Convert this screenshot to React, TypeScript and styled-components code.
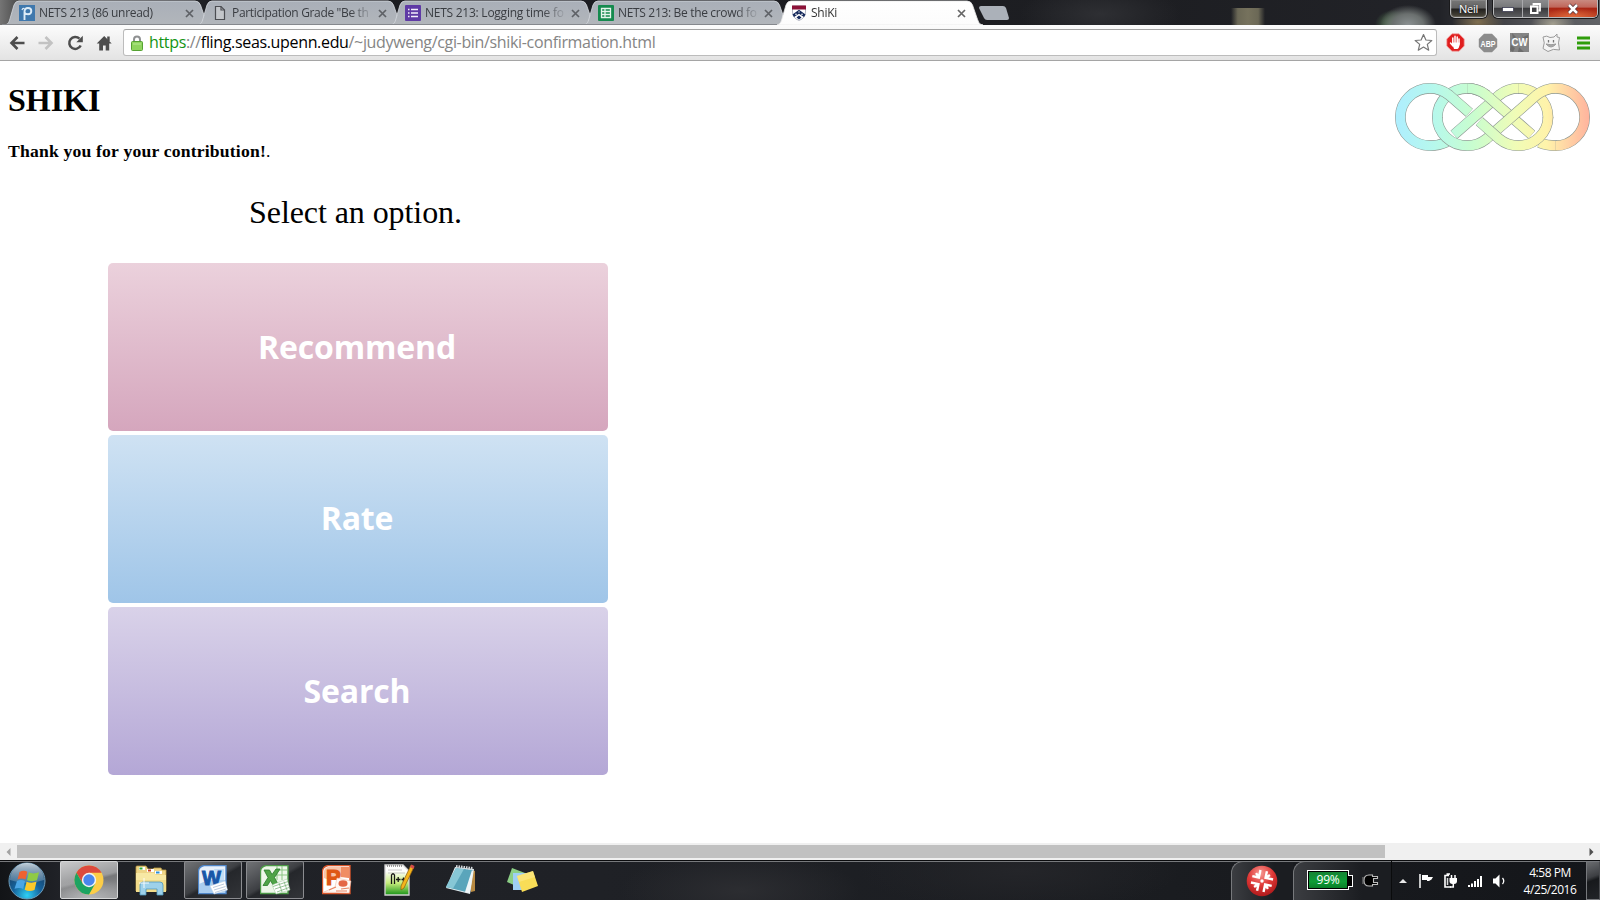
import React from "react";
import styled, { createGlobalStyle, css } from "styled-components";

const GlobalStyle = createGlobalStyle`
  * { box-sizing: border-box; }
  html, body { margin: 0; padding: 0; overflow: hidden; background: #fff; }
`;

const uiFont = `"Open Sans", "Noto Sans", sans-serif`;

const Screen = styled.div`
  width: 1600px;
  height: 900px;
  display: flex;
  flex-direction: column;
  overflow: hidden;
  background: #fff;
  font-family: ${uiFont};
`;

/* ---------- title bar ---------- */

const TitleBar = styled.header`
  height: 25px;
  flex: none;
  display: flex;
  align-items: flex-start;
  padding-left: 6px;
  overflow: hidden;
  background:
    radial-gradient(ellipse 28px 20px at 1408px 25px, #8b9192 0, #6b706f 55%, transparent 100%),
    radial-gradient(ellipse 18px 14px at 1393px 24px, #5e8a5a 0, transparent 100%),
    linear-gradient(90deg, transparent, #6b6856 20%, #76725d 50%, #6b6856 80%, transparent) 1231px 8px / 34px 17px no-repeat,
    radial-gradient(ellipse 22px 14px at 1553px 24px, #a39f8f 0, transparent 100%),
    radial-gradient(ellipse 26px 14px at 1478px 22px, #806f50 0, transparent 100%),
    radial-gradient(ellipse 80px 30px at 1100px 14px, #2e2f33 0, transparent 100%),
    linear-gradient(90deg, #757575 0, #555 14px, #1b1c21 220px, #1d1e22 1150px, #222328 1440px, #55565a 1540px, #606266 1600px);
`;

const TabItem = styled.div<{ $active?: boolean }>`
  position: relative;
  z-index: ${(p) => (p.$active ? 2 : 1)};
  width: 193px;
  height: 25px;
  flex: none;
  display: flex;
  align-items: center;
  padding: 1px 0 0 13px;
`;

const TabShape = styled.svg`
  position: absolute;
  left: -4px;
  top: 0;
  z-index: -1;
`;

const TabTitle = styled.span<{ $active?: boolean; $ls: number }>`
  width: 142px;
  margin-left: 4px;
  flex: none;
  overflow: hidden;
  white-space: nowrap;
  font-size: 12px;
  line-height: 18px;
  letter-spacing: ${(p) => p.$ls}px;
  color: ${(p) => (p.$active ? "#333" : "#3a3d42")};
  mask-image: linear-gradient(90deg, #000 118px, transparent 142px);
`;

const CloseGlyph = styled.svg`
  margin-left: 4px;
  flex: none;
`;

const NewTab = styled.div`
  width: 30px;
  height: 14px;
  margin: 6px 0 0 8px;
  flex: none;
  clip-path: path("M2 0H24Q26 0 27 2L30 12Q30 14 28 14H8Q6 14 5 12L0 2Q0 0 2 0Z");
  background: #abb1b9;
`;

const WindowButtons = styled.div`
  margin-left: auto;
  display: flex;
  gap: 6px;
  padding-right: 2px;
`;

const chromeButton = css`
  height: 18px;
  border: 1px solid #b9babc;
  border-top: 0;
  box-shadow: 0 0 0 1px #1a1a1c, inset 0 0 0 1px rgba(255, 255, 255, 0.12);
  border-radius: 0 0 5px 5px;
`;

const UserButton = styled.div`
  ${chromeButton}
  width: 37px;
  background: linear-gradient(#777 0, #636363 48%, #1f1e1c 52%, #4d493d 100%);
  color: #fff;
  font-size: 11px;
  line-height: 17px;
  text-align: center;
  letter-spacing: -0.2px;
  text-shadow: 0 0 2px #222;
`;

const ControlGroup = styled.div`
  ${chromeButton}
  width: 105px;
  display: flex;
  overflow: hidden;
`;

const ControlButton = styled.div<{ $w: number; $close?: boolean }>`
  width: ${(p) => p.$w}px;
  height: 17px;
  display: flex;
  align-items: center;
  justify-content: center;
  border-right: 1px solid #a9a9ac;
  &:last-child { border-right: 0; }
  background: ${(p) =>
    p.$close
      ? "radial-gradient(ellipse 30px 9px at 50% 100%, #e06a3c, transparent), linear-gradient(#c98a80 0, #c0665a 42%, #a92514 48%, #b93c20 100%)"
      : "linear-gradient(#8b8b8d 0, #77787a 42%, #3a3a3d 50%, #5b5c5f 100%)"};
`;

/* ---------- toolbar ---------- */

const Toolbar = styled.div`
  height: 36px;
  flex: none;
  display: flex;
  align-items: center;
  padding-left: 2px;
  border-bottom: 1px solid #a5a5a5;
  background: linear-gradient(#fcfcfc, #e3e3e3);
`;

const ToolButton = styled.div<{ $w: number }>`
  width: ${(p) => p.$w}px;
  height: 22px;
  flex: none;
  display: flex;
  align-items: center;
  justify-content: center;
`;

const Omnibox = styled.div`
  width: 1314px;
  height: 27px;
  margin: 0 2px 0 5px;
  padding: 0 3px 0 7px;
  flex: none;
  display: flex;
  align-items: center;
  background: #fff;
  border: 1px solid #bcbcbc;
  border-top-color: #a3a3a3;
  border-radius: 3px;
`;

const Url = styled.span`
  flex: 1;
  margin-left: 6px;
  padding-bottom: 1px;
  white-space: nowrap;
  font-size: 16px;
  line-height: 24px;
  letter-spacing: -0.34px;
  color: #858585;
`;

const Scheme = styled.span`
  color: #149414;
`;

const Host = styled.span`
  color: #000;
`;

/* ---------- page ---------- */

const Page = styled.main`
  position: relative;
  flex: 1;
  min-height: 0;
  padding: 0 8px;
  background: #fff;
  color: #000;
  font-family: "Liberation Serif", "Times New Roman", serif;
`;

const Logo = styled.svg`
  position: absolute;
  right: 0;
  top: -1px;
`;

const Heading = styled.h1`
  margin: 0;
  padding-top: 21px;
  font-size: 32px;
  line-height: 37px;
`;

const Thanks = styled.p`
  margin: 0;
  padding: 22px 0 1px;
  font-size: 17.6px;
  line-height: 20px;
  letter-spacing: 0.2px;
`;

const Options = styled.section`
  width: 500px;
  margin-left: 100px;
  display: flex;
  flex-direction: column;
  gap: 4px;
`;

const Prompt = styled.div`
  height: 97px;
  padding: 32px 5px 0 0;
  font-size: 32px;
  line-height: 37px;
  letter-spacing: -0.08px;
  text-align: center;
`;

const OptionCard = styled.button<{ $from: string; $to: string; $lift?: number }>`
  height: 168px;
  padding: 0 2px ${(p) => p.$lift ?? 0}px 0;
  border: 0;
  border-radius: 5px;
  background: linear-gradient(${(p) => p.$from}, ${(p) => p.$to});
  color: #fff;
  font: bold 32px/44px "Open Sans", sans-serif;
  letter-spacing: -0.15px;
`;

const Scrollbar = styled.div`
  height: 17px;
  flex: none;
  display: flex;
  align-items: center;
  background: #f0f0f0;
`;

const ScrollArrow = styled.div`
  width: 17px;
  display: flex;
  justify-content: center;
`;

const ScrollTrack = styled.div`
  flex: 1;
`;

const ScrollThumb = styled.div`
  width: 1368px;
  height: 13px;
  background: #c1c1c1;
`;

/* ---------- taskbar ---------- */

const Taskbar = styled.footer`
  height: 40px;
  flex: none;
  display: flex;
  border-top: 1px solid #0b0c0e;
  box-shadow: inset 0 1px 0 #77797c;
  padding-left: 4px;
  background:
    radial-gradient(ellipse 120px 40px at 740px 30px, #2c2d31, transparent),
    radial-gradient(ellipse 160px 40px at 1020px 10px, #242529, transparent),
    linear-gradient(90deg, #121417 0, #202227 60px, #1f2126 600px, #1b1d21 1100px, #14161a 1600px);
`;

const StartOrb = styled.div`
  width: 45px;
  margin-right: 11px;
  display: flex;
  align-items: center;
  justify-content: center;
`;

const TaskButton = styled.div<{ $state?: "active" | "open" }>`
  width: 58px;
  height: 38px;
  margin: 0 4px 0 0;
  flex: none;
  display: flex;
  align-items: center;
  justify-content: center;
  border: 1px solid transparent;
  border-radius: 2px;
  ${(p) =>
    p.$state === "active" &&
    css`
      border-color: #d5d6d7;
      background: radial-gradient(ellipse 50px 20px at 50% 100%, #b5b6b8, transparent),
        linear-gradient(165deg, #c9c9ca 0, #9b9c9e 48%, #77787a 54%, #8f9092 100%);
    `}
  ${(p) =>
    p.$state === "open" &&
    css`
      border-color: #8b8c90;
      background: linear-gradient(150deg, #717376 0, #3d3f43 48%, #25272b 54%, #323438 100%);
    `}
`;

const Spacer = styled.div`
  flex: 1;
`;

const TrayBand = styled.div<{ $w: number }>`
  width: ${(p) => p.$w}px;
  height: 39px;
  flex: none;
  display: flex;
  align-items: center;
  border-left: 1px solid #77797c;
  border-top: 1px solid #77797c;
  border-radius: 12px 0 0 0;
  background: linear-gradient(90deg, #3b3d41, #1b1d21 70%);
`;

const BandIcon = styled.div`
  margin-left: 14px;
  height: 32px;
`;

const Battery = styled.div`
  position: relative;
  width: 42px;
  height: 20px;
  margin: 0 0 2px 13px;
  border: 1px solid #fff;
  padding: 1px;
  background: #000;
  &::after {
    content: "";
    position: absolute;
    right: -5px;
    top: 4px;
    width: 4px;
    height: 10px;
    border: 1px solid #fff;
    border-left: 0;
    background: #000;
  }
`;

const BatteryFill = styled.div`
  height: 16px;
  background: linear-gradient(#158334, #0d9c35 60%, #0a7e29);
  color: #fff;
  font-size: 12px;
  line-height: 16px;
  text-align: center;
  letter-spacing: -0.2px;
`;

const PlugIcon = styled.svg`
  margin: 0 0 2px 13px;
`;

const Tray = styled.div`
  width: 195px;
  height: 39px;
  flex: none;
  display: flex;
  align-items: center;
  border-left: 1px solid #0a0b0c;
`;

const TrayIcon = styled.div<{ $w: number }>`
  width: ${(p) => p.$w}px;
  flex: none;
  display: flex;
  align-items: center;
  justify-content: center;
`;

const Clock = styled.div`
  flex: 1;
  padding: 1px 0 0 5px;
  color: #fff;
  font-size: 12px;
  line-height: 17px;
  letter-spacing: -0.45px;
  text-align: center;
  white-space: nowrap;
`;

const ShowDesktop = styled.div`
  width: 14px;
  height: 39px;
  flex: none;
  border: 1px solid #77797d;
  border-right-color: #4a4c50;
  background: linear-gradient(160deg, #6b6d70 0, #3d3f43 40%, #17191c 50%, #222428 100%);
`;

/* ---------- tab parts ---------- */

const tabPath = "M3 25C7 23.5 7 22 8.500 17L12 5Q13.500 1 17 1H193Q197 1 198.500 5L203 18C205 23 205 24 209 25Z";

function PFavicon() {
  return (
    <svg width="16" height="16">
      <rect width="16" height="16" fill="#3f78ad" />
      <path d="M5.500 15V7Q5.500 3 9 3Q12.300 3 12.300 6Q12.300 9.200 9 9.200Q6.500 9 5.500 7.500" fill="none" stroke="#dcebf7" strokeWidth="1.900" />
      <path d="M3 5Q3.500 3 5.500 3.500" fill="none" stroke="#dcebf7" strokeWidth="1.200" />
    </svg>
  );
}

function PageFavicon() {
  return (
    <svg width="16" height="16" fill="#c3c6ca" stroke="#4b4d52" strokeWidth="1.200">
      <path d="M3.500 1.500H9L12.500 5V14.500H3.500Z" />
      <path d="M9 1.500V5H12.500" fill="none" />
    </svg>
  );
}

function FormFavicon() {
  return (
    <svg width="16" height="16">
      <rect width="16" height="16" rx="1" fill="#5f3aa5" />
      <path d="M3 4.500H4.500M3 8H4.500M3 11.500H4.500M6 4.500H13M6 8H13M6 11.500H13" stroke="#f3effa" strokeWidth="1.600" />
    </svg>
  );
}

function SheetFavicon() {
  return (
    <svg width="16" height="16">
      <rect width="16" height="16" rx="1" fill="#158a4e" />
      <path d="M3.500 3.500H12.500V12.500H3.500ZM3.500 6.500H12.500M3.500 9.500H12.500M7 3.500V12.500" fill="none" stroke="#e6f4ec" strokeWidth="1.300" />
    </svg>
  );
}

function ShieldFavicon() {
  return (
    <svg width="16" height="16">
      <path d="M1.500 1H14.500V7Q14.500 13 8 15.500Q1.500 13 1.500 7Z" fill="#fff" stroke="#8f93a8" strokeWidth="0.700" />
      <path d="M1 0.500H15V4.500H1Z" fill="#8d1238" />
      <path d="M1.500 9.500L8 4.800L14.500 9.500L13 12L8 8.700L3 12Z" fill="#15295c" />
      <path d="M5.500 12.500L8 10.500L10.500 12.500L8 14.500Z" fill="#15295c" />
      <circle cx="5" cy="9.300" r=".8" fill="#fff" />
      <circle cx="11" cy="9.300" r=".8" fill="#fff" />
      <circle cx="8" cy="6.900" r=".7" fill="#fff" />
    </svg>
  );
}

type TabProps = { id: number; title: string; ls: number; icon: React.ReactNode; active?: boolean };

function Tab({ id, title, ls, icon, active }: TabProps) {
  return (
    <TabItem $active={active}>
      <TabShape width="212" height="25">
        <defs>
          <linearGradient id={`tab${id}`} x1="0" y1="0" x2="0" y2="1">
            <stop offset="0" stopColor={active ? "#fff" : "#a9afb8"} />
            <stop offset="1" stopColor={active ? "#fcfcfc" : "#b2b6bb"} />
          </linearGradient>
        </defs>
        <path d={tabPath} fill={`url(#tab${id})`} stroke={active ? "#e8e8e8" : "#d5d9de"} strokeWidth="0.800" />
        {!active && <path d="M0 24.500H212" stroke="#85888d" />}
      </TabShape>
      {icon}
      <TabTitle $active={active} $ls={ls}>{title}</TabTitle>
      <CloseGlyph width="9" height="9">
        <path d="M1 1L8 8M8 1L1 8" stroke={active ? "#666" : "#5e6166"} strokeWidth="1.700" />
      </CloseGlyph>
    </TabItem>
  );
}

/* ---------- knot logo ---------- */

function Strand({ d }: { d: string }) {
  return (
    <g fill="none">
      <path d={d} stroke="#8c9690" strokeWidth="32" />
      <path d={d} stroke="url(#knot)" strokeWidth="28.500" />
    </g>
  );
}

function KnotLogo() {
  return (
    <Logo width="220" height="110" viewBox="0 0 660 330">
      <defs>
        <linearGradient id="knot" gradientUnits="userSpaceOnUse" x1="45" y1="0" x2="629" y2="0">
          <stop offset="0" stopColor="#aeeeff" />
          <stop offset=".2" stopColor="#b6f8ec" />
          <stop offset=".4" stopColor="#c8fdcf" />
          <stop offset=".62" stopColor="#f0fcb6" />
          <stop offset=".78" stopColor="#fff3aa" />
          <stop offset=".9" stopColor="#ffcfa4" />
          <stop offset="1" stopColor="#ffb39d" />
        </linearGradient>
      </defs>
      <Strand d="M172 175V171A90 86 0 0 1 262 85Q294 85 319 105" />
      <Strand d="M200 246Q177 257 150 257A89 86 0 0 1 150 85Q182 85 207 105L268 158" />
      <Strand d="M418 85H415Q383 85 358 105L222 224" />
      <Strand d="M262 85Q294 85 319 105L455 224" />
      <Strand d="M530 257H527Q500 257 478 248" />
      <Strand d="M415 85A89 86 0 0 1 504 171V175" />
      <Strand d="M527 257A87 86 0 0 0 527 85Q495 85 470 105L319 237Q294 257 262 257A90 86 0 0 1 172 171" />
      <Strand d="M298 184L358 237Q383 257 415 257A89 86 0 0 0 504 171" />
    </Logo>
  );
}

/* ---------- taskbar icons ---------- */

const IconLetter = styled.text`
  font-family: "Liberation Sans", sans-serif;
  font-weight: bold;
`;

function OrbIcon() {
  return (
    <svg width="38" height="38" viewBox="0 0 38 38">
      <defs>
        <radialGradient id="orb" cx=".5" cy=".9" r=".8">
          <stop offset="0" stopColor="#2fd0f5" />
          <stop offset=".5" stopColor="#15629c" />
          <stop offset="1" stopColor="#1b3c5e" />
        </radialGradient>
        <linearGradient id="orbShine" x1="0" y1="0" x2="0" y2="1">
          <stop offset="0" stopColor="#dfe9ef" stopOpacity=".85" />
          <stop offset="1" stopColor="#8fb0c6" stopOpacity=".35" />
        </linearGradient>
      </defs>
      <circle cx="19" cy="19" r="18" fill="url(#orb)" stroke="#6d9dbb" strokeWidth="1" />
      <path d="M2 18A17 17 0 0 1 36 18Q19 24 2 18Z" fill="url(#orbShine)" />
      <path d="M11.500 10Q15.500 7.500 19.300 9.700L17.500 17.500Q13.500 15.500 9.500 17.500Z" fill="#ee6230" />
      <path d="M20.800 10.300Q25 12.500 31 10.300L29 18.300Q24 20 19 18.200Z" fill="#8fca45" />
      <path d="M9 19Q13 17 17 19L15.200 27Q11.500 25 6.500 26.800Z" fill="#4ba6e6" />
      <path d="M18.600 19.700Q23 21.500 28.500 19.800L26.500 28Q21 30 16.700 27.700Z" fill="#fbc92b" />
    </svg>
  );
}

function ChromeIcon() {
  return (
    <svg width="30" height="30" viewBox="-15 -15 30 30">
      <circle r="14.500" fill="#fccd48" />
      <path d="M-12.560 -7.250A14.500 14.500 0 0 1 12.560 -7.250H0L-6.280 3.620Z" fill="#dc4a3d" />
      <path d="M-12.560 -7.250A14.500 14.500 0 0 0 0 14.500L6.280 3.620L-6.280 3.620Z" fill="#1da362" />
      <circle r="7.200" fill="#f3f3f3" />
      <circle r="5.700" fill="#4a86ee" />
    </svg>
  );
}

function ExplorerIcon() {
  return (
    <svg width="34" height="32" viewBox="0 0 34 32">
      <path d="M2 3Q2 2 3 2H12L14 5H19L20 4H27L28 6H32V27H2Z" fill="#eed587" stroke="#b99b45" strokeWidth=".8" />
      <path d="M5 3H11V6H5Z" fill="#fff" /><path d="M5.500 3.500H8.500V5.500H5.500Z" fill="#2cad35" />
      <path d="M13 5H20V8H13Z" fill="#fff" /><path d="M14 5.500H17V7.500H14Z" fill="#cc4125" />
      <path d="M21 7H28V10H21Z" fill="#fff" /><path d="M22 7.500H25.500V9.500H22Z" fill="#2a8ed6" />
      <path d="M2 9H20L22 11H32V28H2Z" fill="#f7e8a4" />
      <path d="M2 16H32V28H2Z" fill="#f0d77f" opacity=".7" />
      <path d="M6 31V21Q6 18 9 18H26Q29 18 29 21V31H23V25H12V31Z" fill="#9dd1ea" stroke="#4e97bd" strokeWidth=".8" />
      <path d="M10 14V24M5 19H15" stroke="#fff" strokeWidth="1" opacity=".9" />
    </svg>
  );
}

function WordIcon() {
  return (
    <svg width="31" height="31" viewBox="1 1 31 31">
      <path d="M7 1.500H29V29.500H1.500V7Q2 2.500 7 1.500Z" fill="#e8f1fb" stroke="#4f86c9" strokeWidth="1.400" />
      <path d="M2 20Q14 14 28 16V29H2Z" fill="#a9cdf0" />
      <path d="M17 5H27V16H20Z" fill="#c3dcf5" />
      <IconLetter x="5" y="21" fontSize="21" fill="#1857a8" textLength="19" lengthAdjust="spacingAndGlyphs" stroke="#1857a8">W</IconLetter>
      <path d="M13 22L28 17L30.500 26L17 30Z" fill="#fff" stroke="#bcd0e4" strokeWidth=".5" />
      <path d="M16 23.500L27 20M17 26L28.500 22.500M18 28.500L29 25" stroke="#a9bdd3" strokeWidth=".8" />
    </svg>
  );
}

function ExcelIcon() {
  return (
    <svg width="31" height="31" viewBox="1 1 31 31">
      <path d="M7 1.500H29V29.500H1.500V7Q2 2.500 7 1.500Z" fill="#edf7e9" stroke="#4c9a47" strokeWidth="1.400" />
      <path d="M18 2V16M23 2V16M16 6H28M16 11H28" stroke="#8bc583" strokeWidth="1" />
      <path d="M5 6H10.500L13 10.500L17 5H21L15.500 13.500L19.500 21H14L11.500 16.500L8.500 21.500H4L9 13.500Z" fill="#4fa447" stroke="#2a7a2b" strokeWidth=".8" />
      <path d="M13 21L28 15L31 26L17 30Z" fill="#fff" stroke="#9cc79a" strokeWidth=".5" />
      <path d="M14 22.500L29 17.500M16 25L29.500 20.500M18 28L30 23.500M20 19L23 28M25 17.500L28 26" stroke="#7fb57d" strokeWidth=".8" />
    </svg>
  );
}

function PowerPointIcon() {
  return (
    <svg width="31" height="31" viewBox="1 1 31 31">
      <path d="M7 1.500H29V29.500H1.500V7Q2 2.500 7 1.500Z" fill="#fff" stroke="#d9562b" strokeWidth="1.400" />
      <path d="M3 7Q4 3 8 3H28V14Q22 12 18 14Q10 18 3 14Z" fill="#f8c4aa" />
      <path d="M20 3H28V14L20 13Z" fill="#f08d63" />
      <IconLetter x="5" y="21" fontSize="22" fill="#df5714" stroke="#df5714" strokeWidth="1.200">P</IconLetter>
      <path d="M16 14L30 17L28 29L3 28L14 23Z" fill="#fff8f4" stroke="#edb29a" strokeWidth=".5" />
      <ellipse cx="22" cy="19.500" rx="4.500" ry="3.200" fill="#e46645" />
      <path d="M8 26L15 23M20 25L28 24M15 27L26 27" stroke="#e78463" strokeWidth="1.200" />
    </svg>
  );
}

function NotepadPlusIcon() {
  return (
    <svg width="32" height="34" viewBox="0 0 32 34">
      <defs>
        <linearGradient id="npp" x1="0" y1="0" x2="0" y2="1">
          <stop offset=".2" stopColor="#fff" />
          <stop offset=".6" stopColor="#c6ed7c" />
          <stop offset="1" stopColor="#189317" />
        </linearGradient>
      </defs>
      <path d="M2 2H20L26 8V32H2Z" fill="url(#npp)" stroke="#d4d4d4" strokeWidth="1.300" />
      <path d="M4 3H20" stroke="#444" strokeDasharray="1 1" />
      <path d="M5 7H19M5 10H22" stroke="#bcbcbc" strokeWidth=".8" />
      <path d="M8.500 21V12Q10 9.500 11.500 12V21M13 16.500H17.500M15.200 14V19M18.500 16.500H22.500M20.500 14.500V18.500" stroke="#161616" strokeWidth="1.300" fill="none" />
      <path d="M28 2L31 4L21 25L18 27L18 23Z" fill="#f5b51b" stroke="#8a5a12" strokeWidth=".7" />
      <path d="M27 4L28.500 1.500L31.500 3L30.500 6Z" fill="#d44b4b" />
    </svg>
  );
}

function NotepadIcon() {
  return (
    <svg width="32" height="32" viewBox="0 0 32 32">
      <path d="M25 5L30 7V27L26 28Z" fill="#b88a42" />
      <path d="M10 3L29 5L25 30L1 24Z" fill="#e4edf0" />
      <path d="M11 4L28 6L21 28L1 23Z" fill="#5aa5bb" />
      <path d="M11 4L19 5L8 24.500L1 23Z" fill="#87c7d6" />
      <path d="M27 6L28 7L25 29L20 28Z" fill="#f0f6f8" />
      <path d="M11 2.500L28 4.500" stroke="#d5dadd" strokeWidth="3" strokeDasharray="1.500 1" />
    </svg>
  );
}

function StickyIcon() {
  return (
    <svg width="34" height="28" viewBox="1 0 34 28">
      <path d="M7 2L20 7L14 21L2 16Z" fill="#8ccf86" />
      <path d="M8 7H22V24H8Z" fill="#9fd0f4" />
      <path d="M12 10L28 5L33 20L17 26Z" fill="#f9dd57" />
      <path d="M12 10L28 5L30 11L14 16Z" fill="#fdeb8a" opacity=".6" />
    </svg>
  );
}

function RedBandIcon() {
  return (
    <svg width="32" height="32" viewBox="-16 -16 32 32">
      <defs>
        <radialGradient id="red" cx=".45" cy=".25" r=".8">
          <stop offset="0" stopColor="#f79a94" />
          <stop offset=".5" stopColor="#df3836" />
          <stop offset="1" stopColor="#a81618" />
        </radialGradient>
      </defs>
      <circle r="15.300" fill="url(#red)" />
      {[12, 102, 192, 282].map((a) => (
        <path key={a} transform={`rotate(${a})`} d="M2.800 -10.500V-3.800H10.500M3.200 -4L6.500 -7.500" stroke="#fff" strokeWidth="2.400" fill="none" />
      ))}
      <circle r="1.700" fill="#fff" />
    </svg>
  );
}

const options = [
  { label: "Recommend", from: "#ebd1dc", to: "#d5a6bd", lift: 0 },
  { label: "Rate", from: "#cfe2f3", to: "#9fc5e8", lift: 2 },
  { label: "Search", from: "#d9d2e9", to: "#b4a7d6", lift: 0 },
];

export default function App() {
  return (
    <Screen>
      <GlobalStyle />
      <TitleBar>
        <Tab id={1} title="NETS 213 (86 unread)" ls={-0.31} icon={<PFavicon />} />
        <Tab id={2} title={'Participation Grade "Be th'} ls={-0.34} icon={<PageFavicon />} />
        <Tab id={3} title="NETS 213: Logging time fo" ls={-0.25} icon={<FormFavicon />} />
        <Tab id={4} title="NETS 213: Be the crowd fo" ls={-0.33} icon={<SheetFavicon />} />
        <Tab id={5} title="ShiKi" ls={-0.25} icon={<ShieldFavicon />} active />
        <NewTab />
        <WindowButtons>
          <UserButton>Neil</UserButton>
          <ControlGroup>
            <ControlButton $w={29}>
              <svg width="12" height="6"><rect x=".5" y="1.500" width="11" height="4" fill="#fff" stroke="#3b3b52" strokeWidth=".8" /></svg>
            </ControlButton>
            <ControlButton $w={27}>
              <svg width="13" height="13" fill="none">
                <path d="M4.500 3.500V2H11V8.500H9.500" stroke="#fff" strokeWidth="1.800" />
                <rect x="2" y="4.500" width="6.500" height="6.500" stroke="#fff" strokeWidth="2" />
              </svg>
            </ControlButton>
            <ControlButton $w={48} $close>
              <svg width="14" height="12" fill="none">
                <path d="M3 2L11 10M11 2L3 10" stroke="#55333a" strokeWidth="4" />
                <path d="M3 2L11 10M11 2L3 10" stroke="#fff" strokeWidth="2.500" />
              </svg>
            </ControlButton>
          </ControlGroup>
        </WindowButtons>
      </TitleBar>

      <Toolbar>
        <ToolButton $w={29}>
          <svg width="16" height="14" fill="none" stroke="#4d4d4d" strokeWidth="2.600"><path d="M15.500 7H3M8.500 1L2.500 7L8.500 13" /></svg>
        </ToolButton>
        <ToolButton $w={29}>
          <svg width="16" height="14" fill="none" stroke="#c2c2c2" strokeWidth="2.600"><path d="M.5 7H13M7.500 1L13.500 7L7.500 13" /></svg>
        </ToolButton>
        <ToolButton $w={29}>
          <svg width="16" height="16" viewBox="-.5 0 16 16">
            <path d="M13.200 10.500A6 6 0 1 1 12 3.600" fill="none" stroke="#4d4d4d" strokeWidth="2.500" />
            <path d="M15.300 .8V7.200H8.800Z" fill="#4d4d4d" />
          </svg>
        </ToolButton>
        <ToolButton $w={29}>
          <svg width="16" height="16" viewBox="-.7 0 16 16" fill="#4d4d4d">
            <path d="M7.500 1L0 8.500H2.500V15.500H6.300V10.500H9V15.500H12.500V8.500H15Z" /><path d="M10.500 1.500H13V6H10.500Z" />
          </svg>
        </ToolButton>
        <Omnibox>
          <svg width="12" height="16">
            <path d="M3 7V4.500Q3 1.500 6 1.500Q9 1.500 9 4.500V7" fill="none" stroke="#8f9192" strokeWidth="2" />
            <rect x=".5" y="6.500" width="11" height="9" rx="1" fill="#8fd45f" stroke="#55a233" />
            <path d="M2 9H10" stroke="#b8ea96" />
          </svg>
          <Url><Scheme>https</Scheme>://<Host>fling.seas.upenn.edu</Host>/~judyweng/cgi-bin/shiki-confirmation.html</Url>
          <svg width="19" height="19" viewBox="0 0 19 19">
            <path d="M9.500 1.500L11.900 7L17.800 7.500L13.300 11.400L14.700 17.200L9.500 14.100L4.300 17.200L5.700 11.400L1.200 7.500L7.100 7Z" fill="#fff" stroke="#767676" strokeWidth="1.200" strokeLinejoin="round" />
          </svg>
        </Omnibox>
        <ToolButton $w={32}>
          <svg width="19" height="19" viewBox="0 0 19 19">
            <path d="M6 .8H13L18.200 6V13L13 18.200H6L.8 13V6Z" fill="#e01e1e" stroke="#f4a3a3" strokeWidth=".7" />
            <path d="M6.800 11V5M9 10V3.300M11.200 10V4M13 11V6M4.500 10L7 13" stroke="#fff" strokeWidth="1.500" strokeLinecap="round" />
            <path d="M6 10V9.500H13.700V12Q13 15 11.500 16H8Z" fill="#fff" />
          </svg>
        </ToolButton>
        <ToolButton $w={33}>
          <svg width="20" height="20" viewBox="0 0 20 20">
            <path d="M6 .8H14L19.200 6V14L14 19.200H6L.8 14V6Z" fill="#8c8c8c" />
            <IconLetter x="2.500" y="13.500" fontSize="9" fill="#fff" textLength="15" lengthAdjust="spacingAndGlyphs">ABP</IconLetter>
          </svg>
        </ToolButton>
        <ToolButton $w={31}>
          <svg width="19" height="19" viewBox="0 0 19 19">
            <rect width="19" height="19" fill="#858585" />
            <path d="M2 0L6 4L3 7ZM11 0L13 4L18 2V6L13 5ZM1 12L5 15L3 19L0 17ZM9 14L14 19H8Z" fill="#6c6c6c" />
            <IconLetter x="1.500" y="13" fontSize="10" fill="#fff" textLength="16" lengthAdjust="spacingAndGlyphs">CW</IconLetter>
          </svg>
        </ToolButton>
        <ToolButton $w={32}>
          <svg width="20" height="20" viewBox="0 0 20 20" fill="none" stroke="#9b9b9b" strokeWidth="1">
            <path d="M2 4Q6 2 9 4.500L13 4L16 1V4L18.500 4.500Q16.500 9 18.500 17Q12 15 7 18.500L2 15.500Q4.500 10 2 4Z" fill="#f4f4f4" />
            <path d="M7.500 7V9.500M12.500 7V9.500" stroke="#777" strokeWidth="1.300" />
            <path d="M5 11Q10 17 15 11Q10 12.500 5 11Z" fill="#a9a9a9" />
          </svg>
        </ToolButton>
        <ToolButton $w={32}>
          <svg width="13" height="14"><path d="M0 2H13M0 7H13M0 12H13" stroke="#2f9d0b" strokeWidth="3" /></svg>
        </ToolButton>
      </Toolbar>

      <Page>
        <KnotLogo />
        <Heading>SHIKI</Heading>
        <Thanks><b>Thank you for your contribution!</b>.</Thanks>
        <Options>
          <Prompt>Select an option.</Prompt>
          {options.map((o) => (
            <OptionCard key={o.label} $from={o.from} $to={o.to} $lift={o.lift}>{o.label}</OptionCard>
          ))}
        </Options>
      </Page>

      <Scrollbar>
        <ScrollArrow><svg width="5" height="8"><path d="M4.500 0V8L.5 4Z" fill="#a3a3a3" /></svg></ScrollArrow>
        <ScrollTrack><ScrollThumb /></ScrollTrack>
        <ScrollArrow><svg width="5" height="8"><path d="M.5 0V8L4.500 4Z" fill="#505050" /></svg></ScrollArrow>
      </Scrollbar>

      <Taskbar>
        <StartOrb><OrbIcon /></StartOrb>
        <TaskButton $state="active"><ChromeIcon /></TaskButton>
        <TaskButton><ExplorerIcon /></TaskButton>
        <TaskButton $state="open"><WordIcon /></TaskButton>
        <TaskButton $state="open"><ExcelIcon /></TaskButton>
        <TaskButton><PowerPointIcon /></TaskButton>
        <TaskButton><NotepadPlusIcon /></TaskButton>
        <TaskButton><NotepadIcon /></TaskButton>
        <TaskButton><StickyIcon /></TaskButton>
        <Spacer />
        <TrayBand $w={62}>
          <BandIcon><RedBandIcon /></BandIcon>
        </TrayBand>
        <TrayBand $w={98}>
          <Battery><BatteryFill>99%</BatteryFill></Battery>
          <PlugIcon width="17" height="13">
            <path d="M10.500 1H7Q2 1 2 6.500Q2 12 7 12H10.500V10.500H15.500V8.500H11.500V4.500H15.500V2.500H10.500Z" fill="#000" stroke="#bdbdbd" strokeWidth="1.100" />
            <path d="M1 3V10" stroke="#8a8a8a" strokeWidth="1" />
          </PlugIcon>
        </TrayBand>
        <Tray>
          <TrayIcon $w={21}>
            <svg width="8" height="4"><path d="M0 4L4 0L8 4Z" fill="#e8e8e8" /></svg>
          </TrayIcon>
          <TrayIcon $w={27}>
            <svg width="15" height="16" viewBox="0 0 15 16">
              <path d="M1 1V15" stroke="#fff" strokeWidth="1.500" />
              <path d="M3 2H9V4H14L12.500 6.500L10 8H8V7H3Z" fill="#fff" />
            </svg>
          </TrayIcon>
          <TrayIcon $w={21}>
            <svg width="16" height="16" viewBox="0 0 16 16" fill="none">
              <path d="M6 2.500H2V14H8M3.500 1H7" stroke="#fff" strokeWidth="1.600" />
              <path d="M4.500 5V12" stroke="#d8d8d8" strokeWidth="1.500" />
              <path d="M6.500 5H14V8Q14 11 11 11H9.500Q6.500 11 6.500 8Z" fill="#fff" />
              <path d="M8.500 2V5M12 2V5M10.300 11V14H7" stroke="#fff" strokeWidth="1.500" />
            </svg>
          </TrayIcon>
          <TrayIcon $w={28}>
            <svg width="15" height="12"><path d="M1 10V12M4 8.500V12M7 6V12M10 4V12M13 1V12" stroke="#fff" strokeWidth="2" /></svg>
          </TrayIcon>
          <TrayIcon $w={20}>
            <svg width="13" height="14" viewBox="0 0 13 14">
              <path d="M0 4.500H2.500L6.500 .5V13.500L2.500 9.500H0Z" fill="#fff" />
              <path d="M9.500 4Q12 7 9.500 10" stroke="#fff" strokeWidth="1.300" fill="none" />
            </svg>
          </TrayIcon>
          <Clock>4:58 PM<br />4/25/2016</Clock>
        </Tray>
        <ShowDesktop />
      </Taskbar>
    </Screen>
  );
}
